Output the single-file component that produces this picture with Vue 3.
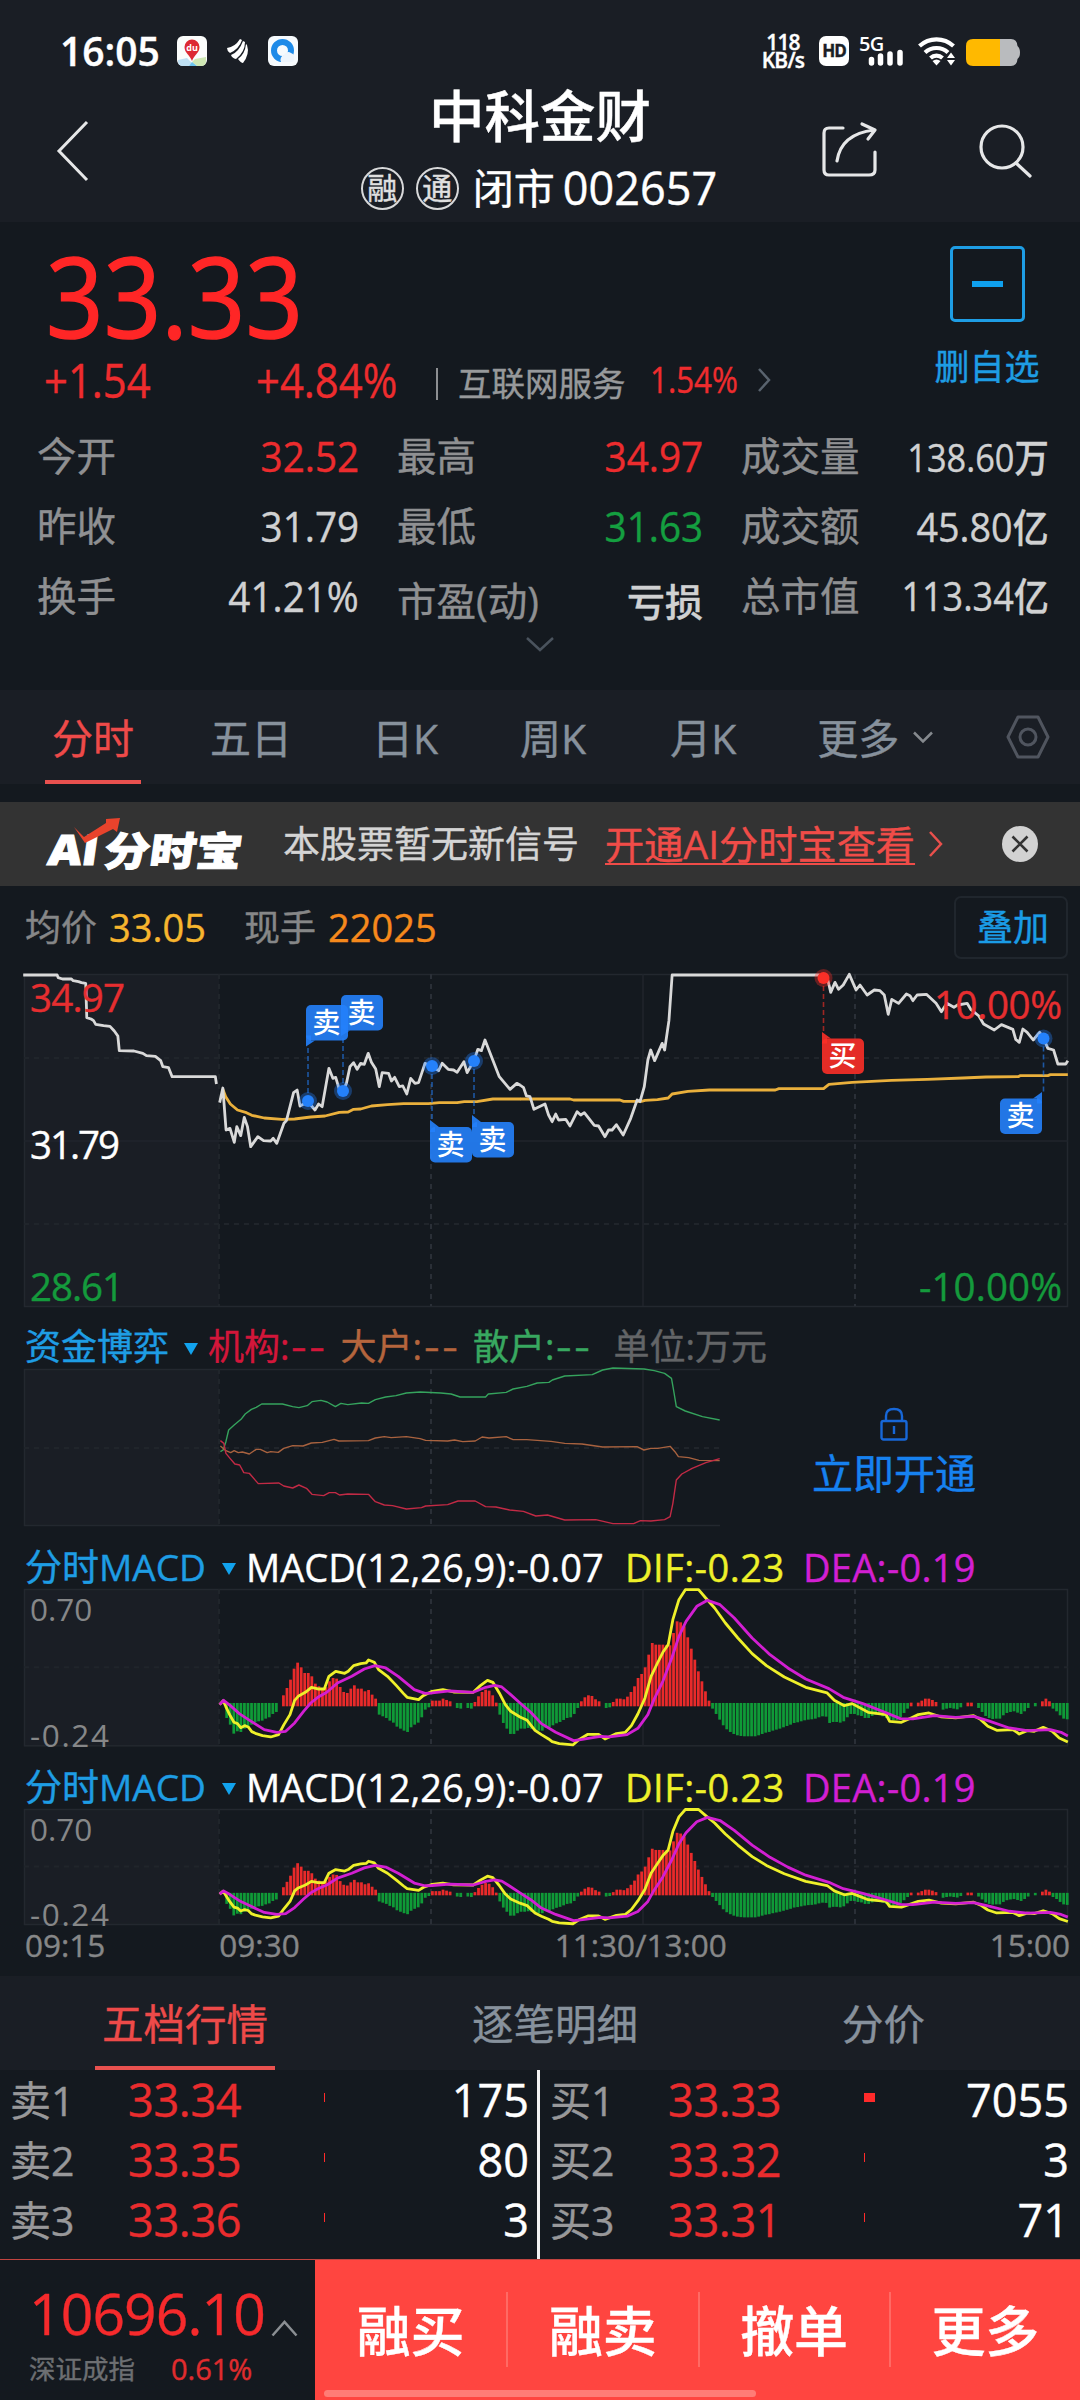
<template>
  <div class="app">
    <!-- status bar -->
    <div class="status">
      <span class="clock">16:05</span>
      <svg class="st-icon" width="30" height="30" viewBox="0 0 30 30">
        <rect width="30" height="30" rx="6" fill="#fbfdfc" />
        <path d="M1 24 L10 22 L15 27 L12 30 H6 Q1 30 1 25Z" fill="#bfe0f4" />
        <path d="M18 23 L29 21 V25 Q29 30 24 30 H20 L15 26Z" fill="#cfe8b4" />
        <path d="M12 30 L15 26 L20 30Z" fill="#6cc4ee" />
        <path d="M15 25 C13 19 7.500 17 7.500 11 A7.500 7.500 0 0 1 22.500 11 C22.500 17 17 19 15 25Z" fill="#dd2a33" />
        <text x="15" y="14.500" class="du">du</text>
      </svg>
      <svg class="st-icon swoosh" width="23" height="26" viewBox="0 0 23 26">
        <path d="M0 10 Q8 9 13 1 L15 2 Q12 11 3 15 Q0 13 0 10Z" fill="#fff" />
        <path d="M4 17 Q12 14 16 3 L18 4 Q18 14 9 21 Q5 20 4 17Z" fill="#fff" />
        <path d="M11 21 Q18 16 19 6 L20 7 Q23 16 16 25 Q14 25 11 21Z" fill="#fff" />
      </svg>
      <svg class="st-icon" width="30" height="30" viewBox="0 0 30 30">
        <rect width="30" height="30" rx="6" fill="#f6fafd" />
        <circle cx="14.500" cy="14.500" r="8.500" fill="none" stroke="#1d8ae8" stroke-width="6" />
        <path d="M13 26 a5 5 0 0 1 3 -7 a4.500 4.500 0 0 1 7 -2 a4 4 0 0 1 3 5 q1 3 -2 4Z" fill="#eef5fc" />
      </svg>
      <div class="spacer"></div>
      <div class="speed"><span>118</span><span>KB/s</span></div>
      <div class="hd">HD</div>
      <svg class="signal" width="46" height="32" viewBox="0 0 46 32">
        <text x="0" y="15.500" class="fiveg">5G</text>
        <path d="M12.500 28V24.500M21.500 28V21M31 28V19M41 28V17.500" stroke="#fff" stroke-width="5.500" stroke-linecap="round" />
      </svg>
      <svg class="wifi" width="38" height="30" viewBox="0 0 38 30">
        <g fill="none" stroke="#fff" stroke-width="4.200">
          <path d="M1.500 10 A25 25 0 0 1 35.500 10" />
          <path d="M7 16.500 A17 17 0 0 1 30 16.500" />
          <path d="M12.500 22 A9 9 0 0 1 24.500 22" />
        </g>
        <path d="M14.500 25 Q18.500 22 22.500 25 L18.500 29.500Z" fill="#fff" />
        <path d="M29 22 L33 16.500 L37 22Z M29 24 H37 L33 29.500Z" fill="#fff" />
      </svg>
      <svg class="battery" width="54" height="27" viewBox="0 0 54 27">
        <path d="M34 0 H45 Q51 0 51.500 7 Q54 9 54 13.500 Q54 18 51.500 20 Q51 27 45 27 H34Z" fill="#b9bbbe" />
        <path d="M7 0 H34 V27 H7 Q0 27 0 20 V7 Q0 0 7 0Z" fill="#ffb900" />
      </svg>
    </div>

    <!-- title bar -->
    <div class="header">
      <svg class="back" width="34" height="62" viewBox="0 0 34 62">
        <path d="M31 2 L3 31 L31 60" fill="none" stroke="#e6e7e8" stroke-width="3" />
      </svg>
      <div class="title">
        <div class="name">中科金财</div>
        <div class="code">
          <span class="badge">融</span>
          <span class="badge">通</span>
          <span class="market">闭市</span>
          <span>002657</span>
        </div>
      </div>
      <div class="actions">
        <svg width="58" height="58" viewBox="0 0 58 58">
          <g fill="none" stroke="#e6e7e8" stroke-width="3.200" stroke-linecap="round" stroke-linejoin="round">
            <path d="M22 7 H8 Q3 7 3 12 V49 Q3 54 8 54 H48 Q54 54 54 49 V31" />
            <path d="M16 40 Q20 13 53 9 M41 3 L54 9 L47 18" />
          </g>
        </svg>
        <svg width="54" height="58" viewBox="0 0 54 58">
          <g fill="none" stroke="#e6e7e8" stroke-width="3.200" stroke-linecap="round">
            <circle cx="23" cy="26" r="21" />
            <path d="M37 42 L51 55" />
          </g>
        </svg>
      </div>
    </div>

    <!-- quote -->
    <div class="quote">
      <div class="quote-top">
        <div class="left">
          <div class="price">33.33</div>
          <div class="change">
            <span class="diff">+1.54</span>
            <span class="rate">+4.84%</span>
            <i class="bar"></i>
            <span class="industry">互联网服务</span>
            <span class="industry-rate">1.54%</span>
            <svg width="14" height="24" viewBox="0 0 14 24">
              <path d="M2 1 L12 12 L2 23" fill="none" stroke="#59636e" stroke-width="2.500" />
            </svg>
          </div>
        </div>
        <div class="fav">
          <div class="fav-box"><i></i></div>
          <span>删自选</span>
        </div>
      </div>
      <div class="stats">
        <div v-for="(item, i) in stats" :key="item.label" class="stat" :class="{ low: i === 7 }">
          <span class="label">{{ item.label }}</span>
          <span class="value" :class="item.cls">{{ item.value }}<b v-if="item.unit">{{ item.unit }}</b></span>
        </div>
      </div>
      <svg class="expand" width="28" height="15" viewBox="0 0 28 15">
        <path d="M1 1 L14 13 L27 1" fill="none" stroke="#4a535d" stroke-width="2.500" />
      </svg>
    </div>

    <!-- period tabs -->
    <div class="periods">
      <span v-for="(p, i) in periods" :key="p.text" class="period" :class="{ active: i === 0 }" :style="{ marginLeft: p.gap + 'px' }">{{ p.text }}</span>
      <svg class="more" width="20" height="13" viewBox="0 0 20 13">
        <path d="M1 1.500 L10 10.500 L19 1.500" fill="none" stroke="#85898e" stroke-width="2.500" />
      </svg>
      <svg class="setting" width="44" height="44" viewBox="0 0 44 44">
        <g fill="none" stroke="#50555f" stroke-width="3" stroke-linejoin="round">
          <path d="M12 2 H32 L42 22 L32 42 H12 L2 22Z" />
          <circle cx="22" cy="22" r="8" />
        </g>
      </svg>
    </div>

    <!-- AI banner -->
    <div class="banner">
      <svg class="logo" width="204" height="76" viewBox="40 806 204 76">
        <g class="logo-text" transform="translate(121,0) skewX(-8)">
          <text x="47" y="865" textLength="50" lengthAdjust="spacingAndGlyphs" font-size="42">AI</text>
          <text x="103" y="866" textLength="138" lengthAdjust="spacingAndGlyphs" font-size="40">分时宝</text>
        </g>
        <path d="M74 827 L84 837 L106 823 L106 819 L120 818 L117 832 L113 829 L85 843Z" fill="#e8432c" />
      </svg>
      <span class="tip">本股票暂无新信号</span>
      <span class="link">开通AI分时宝查看</span>
      <svg width="16" height="26" viewBox="0 0 16 26">
        <path d="M2 1 L13 13 L2 25" fill="none" stroke="#e9504c" stroke-width="2.500" />
      </svg>
      <svg class="close" width="36" height="36" viewBox="0 0 36 36">
        <circle cx="18" cy="18" r="18" fill="#d2d2d2" />
        <path d="M10.500 10.500 L25.500 25.500 M25.500 10.500 L10.500 25.500" stroke="#333" stroke-width="2.600" />
      </svg>
    </div>

    <!-- average / last hand -->
    <div class="legend">
      <span class="gray">均价</span>
      <span class="avg">33.05</span>
      <span class="gray hand">现手</span>
      <span class="vol">22025</span>
      <span class="overlay">叠加</span>
    </div>

    <!-- price chart -->
    <svg class="chart" width="1080" height="345" viewBox="0 965 1080 345">
      <rect x="24" y="974" width="195" height="332" fill="#1a1e25" />
      <rect x="24.500" y="974.500" width="1043" height="332" class="frame" />
      <path d="M24 1058H1068M24 1224H1068M219 974V1306" class="dash faint" />
      <path d="M431 974V1306M855 974V1306" class="dash" />
      <path d="M24 1141H1068M643 974V1306" class="grid" />
      <g class="line avg-line">
        <polyline :points="avgAm" transform="translate(0,950) scale(0.35714,0.33333)" />
        <polyline :points="avgPm" transform="translate(520,950) scale(0.35714,0.33333)" />
      </g>
      <g class="line price-line">
        <polyline :points="auction" transform="translate(0,950) scale(0.35714,0.33333)" />
        <polyline :points="priceAm" transform="translate(0,950) scale(0.35714,0.33333)" />
        <polyline :points="pricePm" transform="translate(520,950) scale(0.35714,0.33333)" />
      </g>
      <g v-for="(f, i) in flags" :key="i">
        <line :x1="f.dx" :y1="f.dy" :x2="f.dx" :y2="f.tail" :stroke="f.color" class="stem" />
        <circle :cx="f.dx" :cy="f.dy" r="9" :fill="f.color" opacity="0.35" />
        <circle :cx="f.dx" :cy="f.dy" r="6" :fill="f.color" />
        <path :d="tailPath(f)" :fill="f.color" opacity="0.9" />
        <rect :x="f.x" :y="f.y" width="42" height="35.500" rx="5" :fill="f.color" opacity="0.9" />
        <text :x="f.x + 20.500" :y="f.y + 27.500" class="flag-text">{{ f.text }}</text>
      </g>
      <g class="axis-lg">
        <text x="30" y="1011.500" textLength="95" fill="#e62e30" stroke="#e62e30">34.97</text>
        <text x="30" y="1158.500" textLength="90" fill="#fff" stroke="#fff">31.79</text>
        <text x="30" y="1301" textLength="94" fill="#149a3c" stroke="#149a3c">28.61</text>
        <text x="934" y="1018.500" textLength="128" fill="#e62e30" stroke="#e62e30">10.00%</text>
        <text x="919" y="1301" textLength="143" fill="#149a3c" stroke="#149a3c">-10.00%</text>
      </g>
    </svg>

    <!-- fund flow -->
    <div class="ind-title fund-title">
      <span class="ind-name">资金博弈</span><i class="tri"></i>
      <span class="org">机构:<em>--</em></span>
      <span class="big">大户:<em>--</em></span>
      <span class="small">散户:<em>--</em></span>
      <span class="unit">单位:万元</span>
    </div>
    <div class="fund">
      <svg class="chart" width="722" height="164" viewBox="0 1366 722 164">
        <rect x="24" y="1369" width="195" height="157" fill="#1a1e25" />
        <path d="M720 1369.500H24.500V1525.500H720" class="frame" />
        <path d="M24 1448H720M219 1369V1526" class="dash faint" />
        <path d="M431 1369V1526" class="dash" />
        <path d="M643 1369V1526" class="grid" />
        <g class="line thin" transform="translate(0,1310) scale(0.68871,0.33333)">
          <polyline :points="fundGreen" stroke="#35a35d" />
          <polyline :points="fundOrange" stroke="#a8623f" />
          <polyline :points="fundRed" stroke="#c22a45" />
        </g>
      </svg>
      <div class="unlock">
        <svg width="28" height="34" viewBox="0 0 28 34">
          <g fill="none" stroke="#1767d8" stroke-width="2.400">
            <rect x="1.500" y="14" width="25" height="18.500" rx="2" />
            <path d="M6 14 V9 Q6 2 14 2 Q22 2 22 9 V14 M14 19 V27" />
          </g>
        </svg>
        <span>立即开通</span>
      </div>
    </div>

    <!-- MACD, shown twice with different heights -->
    <template v-for="m in macds" :key="m.box">
      <div class="ind-title">
        <span class="ind-name macd-name">分时MACD</span><i class="tri"></i>
        <span class="macd">MACD(12,26,9):-0.07</span>
        <span class="dif">DIF:-0.23</span>
        <span class="dea">DEA:-0.19</span>
      </div>
      <svg class="chart" width="1080" :height="m.box" :viewBox="`0 -3 1080 ${m.box}`">
        <rect x="24" y="0" width="195" :height="m.height" fill="#1a1e25" />
        <rect x="24.500" y="0.500" width="1043" :height="m.height" class="frame" />
        <path :d="`M24 ${m.height / 2}H1068M219 0V${m.height}`" class="dash faint" />
        <path :d="`M431 0V${m.height}M855 0V${m.height}`" class="dash" />
        <path :d="`M643 0V${m.height}`" class="grid" />
        <g :transform="`scale(0.35714,${m.height / 469}) translate(0,-178)`">
          <rect v-for="b in bars" :key="b.x" :x="b.x" :y="b.y" width="7.800" :height="b.h" :fill="b.color" />
          <g class="line">
            <polyline :points="dif" stroke="#eef02a" />
            <polyline :points="dea" stroke="#d21fd2" />
          </g>
        </g>
        <g class="axis-sm">
          <text x="30" y="32">0.70</text>
          <text x="30" :y="m.height + 1.500" textLength="79">-0.24</text>
        </g>
      </svg>
    </template>
    <div class="times">
      <span>09:15</span>
      <span class="t2">09:30</span>
      <span class="t3">11:30/13:00</span>
      <span class="t4">15:00</span>
    </div>

    <!-- order book -->
    <div class="book-tabs">
      <span class="book-tab active">五档行情</span>
      <span class="book-tab detail">逐笔明细</span>
      <span class="book-tab">分价</span>
    </div>
    <div class="book">
      <div v-for="(side, i) in book" :key="i" class="side">
        <div v-for="row in side" :key="row.label" class="order">
          <span class="order-label">{{ row.label }}</span>
          <span class="order-price">{{ row.price }}</span>
          <span class="tick"><i :style="{ width: row.bar + 'px' }"></i></span>
          <span class="order-vol">{{ row.vol }}</span>
        </div>
      </div>
    </div>

    <!-- bottom bar -->
    <div class="bottom">
      <div class="index">
        <div class="index-main">
          <span>10696.10</span>
          <svg width="27" height="17" viewBox="0 0 27 17">
            <path d="M1.500 15.500 L13.500 2 L25.500 15.500" fill="none" stroke="#8b8f93" stroke-width="2.500" />
          </svg>
        </div>
        <div class="index-sub"><span>深证成指</span><span class="pct">0.61%</span></div>
      </div>
      <div class="trade">
        <span v-for="t in ['融买', '融卖', '撤单', '更多']" :key="t" class="trade-btn">{{ t }}</span>
        <i class="home-bar"></i>
      </div>
    </div>
  </div>
</template>

<script setup>
const stats = [
  { label: '今开', value: '32.52', cls: 'red' },
  { label: '最高', value: '34.97', cls: 'red' },
  { label: '成交量', value: '138.60', unit: '万', cls: 's39' },
  { label: '昨收', value: '31.79' },
  { label: '最低', value: '31.63', cls: 'green' },
  { label: '成交额', value: '45.80', unit: '亿', cls: 's42' },
  { label: '换手', value: '41.21%' },
  { label: '市盈(动)', value: '亏损', cls: 'cn' },
  { label: '总市值', value: '113.34', unit: '亿', cls: 's40' }
]

const periods = [
  { text: '分时', gap: 45 },
  { text: '五日', gap: 69 },
  { text: '日K', gap: 80 },
  { text: '周K', gap: 82 },
  { text: '月K', gap: 84 },
  { text: '更多', gap: 81 }
]

const macds = [
  { box: 164, height: 156.3 },
  { box: 122, height: 115 }
]

const book = [
  [
    { label: '卖1', price: '33.34', bar: 1, vol: '175' },
    { label: '卖2', price: '33.35', bar: 1, vol: '80' },
    { label: '卖3', price: '33.36', bar: 1, vol: '3' }
  ],
  [
    { label: '买1', price: '33.33', bar: 11, vol: '7055' },
    { label: '买2', price: '33.32', bar: 1, vol: '3' },
    { label: '买3', price: '33.31', bar: 1, vol: '71' }
  ]
]

const BLUE = '#2481fb'
const flags = [
  { text: '卖', x: 306, y: 1005, dx: 308, dy: 1101, tail: 1046.5, color: BLUE },
  { text: '卖', x: 341, y: 995, dx: 343, dy: 1091, tail: 1036, color: BLUE },
  { text: '卖', x: 430, y: 1127, dx: 432, dy: 1066, tail: 1120, color: BLUE },
  { text: '卖', x: 472, y: 1122, dx: 474, dy: 1061, tail: 1115, color: BLUE },
  { text: '买', x: 822, y: 1038.5, dx: 823.5, dy: 978, tail: 1032, color: '#fb2f27' },
  { text: '卖', x: 1000, y: 1098.5, dx: 1043.5, dy: 1038.5, tail: 1092, color: BLUE, right: true }
]

// small triangle that joins a flag to its dashed stem
function tailPath(f) {
  const edge = f.tail < f.y ? f.y : f.y + 35.5
  if (f.right) return `M${f.x + 42} ${f.tail}V${edge + 5}H${f.x + 37}V${edge}H${f.x + 33}Z`
  const inner = f.tail < f.y ? edge + 5 : edge - 5
  return `M${f.x} ${f.tail}V${inner}H${f.x + 5}V${edge}H${f.x + 9}Z`
}

const auction = '65,75 160,75 163,83 175,87 200,87 205,92 220,95 228,98 240,100 243,203 255,207 262,212 268,223 290,227 308,229 320,243 330,258 334,302 375,303 400,310 410,317 435,319 450,332 456,350 472,353 482,380 603,380 606,402'
const priceAm = '615,458 624,414 633,540 644,535 656,577 663,530 674,557 684,502 693,530 702,590 722,560 738,572 758,573 765,565 775,580 795,520 802,512 822,428 832,420 840,468 862,455 882,480 892,462 902,470 921,355 932,385 940,382 950,418 960,423 970,400 980,350 990,338 1000,358 1010,340 1020,343 1031,310 1040,337 1052,357 1062,410 1070,368 1088,370 1096,393 1105,382 1118,410 1128,408 1139,432 1150,385 1162,400 1172,398 1190,340 1209,350 1228,362 1238,340 1255,358 1270,360 1280,367 1299,335 1308,368 1327,332 1338,298 1348,302 1358,270 1398,380 1428,418 1447,400 1457,406'
const pricePm = '0,405 10,413 18,438 28,440 39,478 70,462 80,495 90,515 100,492 108,510 128,508 140,528 160,485 170,495 180,488 208,526 220,528 238,560 248,540 258,540 270,524 289,555 310,505 328,450 336,455 348,410 358,330 366,300 377,332 398,280 405,300 417,212 426,75 838,75 850,85 862,90 870,127 882,97 892,118 905,105 922,73 941,120 952,105 972,135 992,120 1008,122 1020,135 1031,193 1041,148 1060,160 1082,132 1092,137 1100,152 1112,135 1138,133 1165,160 1180,185 1195,160 1215,172 1225,165 1252,160 1262,178 1285,198 1298,222 1328,240 1348,224 1380,238 1388,268 1398,277 1408,237 1420,247 1437,270 1455,247 1466,265 1478,295 1494,300 1506,342 1528,342 1534,332'
const avgAm = '624,418 632,440 645,462 665,480 690,488 705,496 740,504 790,508 825,507 870,501 910,498 950,487 975,486 990,478 1010,477 1040,468 1085,464 1130,461 1200,461 1230,458 1280,458 1300,455 1335,455 1380,447 1457,447'
const avgPm = '0,447 140,447 150,450 280,450 290,454 340,454 350,451 385,449 415,444 426,432 470,424 530,420 715,420 725,416 850,416 865,403 930,397 1040,391 1140,388 1240,384 1305,381 1395,380 1400,377 1478,377 1485,374 1534,374'

const fundGreen = '320,425 324,420 328,395 332,360 340,345 350,328 356,312 365,298 372,292 380,282 410,282 425,290 434,293 446,287 453,275 466,271 475,276 487,290 495,280 505,284 525,279 535,280 545,269 560,261 575,257 590,249 610,246 640,249 655,252 668,261 705,261 709,252 735,247 745,237 765,229 780,219 797,217 802,210 820,198 860,194 875,180 890,174 935,177 950,182 965,190 975,205 978,240 982,290 995,303 1020,320 1045,330'
const fundOrange = '320,408 328,422 335,428 340,422 346,428 352,426 362,432 372,418 378,418 388,428 393,425 404,427 412,415 425,407 440,408 452,399 468,397 485,388 492,393 535,392 545,384 558,380 568,383 590,380 610,386 618,391 650,393 660,390 672,395 690,393 700,381 710,384 735,380 745,389 765,389 785,392 800,394 820,400 845,402 875,411 925,410 935,420 945,415 955,415 973,409 980,425 985,440 1000,443 1015,451 1045,452'
const fundRed = '320,392 325,400 328,430 334,445 341,462 348,465 354,488 362,490 375,521 405,519 412,528 425,534 434,525 445,535 453,553 470,557 478,548 487,548 493,555 505,552 535,553 545,575 558,585 570,587 590,597 612,593 618,588 650,584 665,573 690,573 705,590 720,591 740,600 760,604 778,618 795,615 820,630 865,629 890,641 920,641 930,632 945,633 965,629 973,620 977,580 982,510 990,492 1005,475 1025,458 1045,446'

const dif = '615,525 625,513 632,530 643,555 655,578 665,582 674,594 685,588 695,592 705,606 715,611 735,618 758,622 780,615 795,585 812,555 825,512 835,500 855,488 872,473 890,478 908,478 921,440 940,425 965,431 975,425 990,408 1010,402 1025,400 1032,391 1048,398 1060,420 1085,440 1110,468 1130,492 1140,503 1172,510 1185,498 1210,485 1240,480 1270,487 1325,488 1345,468 1365,452 1380,458 1398,490 1415,525 1430,545 1456,562 1476,572 1498,602 1516,615 1536,628 1546,636 1566,642 1604,646 1621,630 1646,614 1676,614 1694,628 1726,612 1751,608 1768,588 1786,553 1806,505 1823,440 1841,400 1856,368 1871,345 1884,270 1901,210 1919,180 1956,180 1976,205 2001,235 2031,280 2066,325 2106,372 2146,408 2196,442 2256,473 2316,490 2336,512 2364,528 2386,522 2431,548 2481,555 2491,575 2524,578 2551,565 2571,555 2601,550 2636,562 2676,565 2726,558 2746,570 2766,590 2791,602 2836,600 2854,613 2876,603 2896,605 2921,593 2946,605 2966,625 2990,637'
const dea = '615,525 626,512 645,528 670,552 700,573 740,600 775,608 800,605 825,580 850,545 870,520 890,503 915,488 945,460 985,440 1020,418 1050,408 1080,415 1115,440 1160,480 1190,491 1210,490 1260,484 1325,488 1360,473 1385,467 1405,472 1430,495 1456,520 1486,548 1516,582 1556,608 1606,633 1626,630 1681,620 1706,622 1756,615 1786,596 1814,555 1831,510 1856,455 1881,385 1901,320 1921,275 1951,230 1981,212 2016,225 2056,265 2106,325 2156,375 2206,415 2256,448 2321,477 2361,503 2416,522 2476,547 2521,567 2556,568 2616,558 2676,563 2726,560 2766,573 2826,595 2876,603 2941,600 2971,608 2990,619'

// histogram, one value per minute, positive = red
const hist = [
  0, 0, -40, -60, -87, -80, -82, -72, -65, -60, -53, -50, -48, -42, -38, -28, -22, 0, 28, 50,
  75, 108, 126, 112, 95, 95, 85, 63, 55, 48, 52, 70, 80, 78, 53, 38, 35, 48, 58, 48,
  48, 40, 44, 30, 18, -30, -35, -40, -48, -54, -66, -72, -78, -82, -68, -60, -54, -38, -15, -8,
  12, 12, 12, 18, 14, 10, 0, -10, -12, 0, -10, -12, 8, 25, 38, 45, 42, 28, 6, -30,
  -55, -72, -88, -88, -78, -72, -72, -70, -73, -76, -78, -78, -70, -68, -62, -56, -52, -46, -40, -38,
  -28, -10, 10, 22, 28, 26, 16, 10, 0, -10, -8, 8, 18, 18, 16, 24, 38, 55, 80, 92,
  112, 150, 185, 180, 180, 180, 178, 178, 215, 250, 247, 235, 202, 168, 135, 100, 70, 40, 12, -12,
  -28, -45, -62, -74, -82, -88, -92, -94, -95, -95, -95, -95, -92, -88, -84, -82, -78, -75, -72, -68,
  -64, -60, -55, -53, -50, -47, -45, -44, -42, -38, -35, -36, -55, -52, -52, -54, -50, -38, -28, -28,
  -32, -34, -40, -40, -34, -30, -28, -35, -40, -45, -46, -46, -38, -25, -12, 6, 0, 6, 12, 18,
  18, 14, 8, 0, -15, -12, -10, -12, -14, -8, 0, 6, 6, 0, -10, -22, -34, -40, -43, -42,
  -42, -32, -25, -22, -20, -24, -28, -20, -10, 0, -5, 0, 10, 18, 10, -12, -20, -32, -42, -44
]

const bars = hist
  .map((v, i) => ({
    x: +(611 + i * 9.93).toFixed(1),
    y: v > 0 ? 525 - v : 520,
    h: Math.abs(v) + 5,
    color: v > 0 ? '#e92a2a' : '#0f9a37',
    v
  }))
  .filter((b) => b.v !== 0)
</script>

<style>
body {
  background: #14191f;
}
</style>

<style scoped>
.app {
  width: 1080px;
  height: 2400px;
  overflow: hidden;
  background: #14191f;
  color: #fff;
  font-family: "Open Sans", "Noto Sans CJK SC", sans-serif;
  white-space: nowrap;
  -webkit-text-stroke: 0.4px;
}

svg {
  display: block;
  flex: none;
  overflow: visible;
}

i,
em {
  font-style: normal;
}

/* status bar */
.status {
  display: flex;
  align-items: center;
  height: 102px;
  padding: 0 60px 0 60px;
  box-sizing: border-box;
  background: #1a1e25;
}
.clock {
  width: 117px;
  font-size: 39px;
  line-height: 52px;
  font-weight: 600;
}
.st-icon {
  margin-right: 20px;
}
.swoosh {
  margin-right: 18px;
}
.du {
  fill: #fff;
  font-size: 9px;
  font-weight: 700;
  text-anchor: middle;
}
.spacer {
  flex: 1;
}
.speed {
  display: flex;
  flex-direction: column;
  align-items: center;
  width: 42px;
  margin-right: 15px;
  font-size: 21px;
  line-height: 18px;
  font-weight: 600;
  letter-spacing: -0.8px;
}
.hd {
  width: 30px;
  height: 30px;
  margin-right: 10px;
  border-radius: 7px;
  background: #fff;
  color: #1a1e25;
  font-size: 17px;
  line-height: 30px;
  font-weight: 700;
  text-align: center;
  letter-spacing: -1px;
}
.signal {
  margin-right: 13px;
}
.fiveg {
  fill: #fff;
  font-size: 20px;
  font-weight: 600;
  letter-spacing: -0.8px;
}
.wifi {
  margin-right: 10px;
}
.battery {
  margin-top: 3px;
}

/* header */
.header {
  display: grid;
  grid-template-columns: 300px 480px 300px;
  height: 120px;
  background: #1a1e25;
}
.back {
  margin: 18px 0 0 56px;
}
.title {
  display: flex;
  flex-direction: column;
  align-items: center;
  margin-top: -18px;
}
.name {
  height: 66px;
  font-size: 55.5px;
  line-height: 64px;
  font-weight: 500;
}
.code {
  display: flex;
  align-items: center;
  height: 76px;
  margin-right: 2px;
  font-size: 45px;
  line-height: 76px;
}
.badge {
  box-sizing: border-box;
  width: 43px;
  height: 43px;
  margin-right: 12px;
  border: 2px solid #d8d9da;
  border-radius: 50%;
  font-size: 30px;
  line-height: 38px;
  text-align: center;
  color: #e0e0e0;
}
.market {
  margin: 0 8px 0 2px;
  font-size: 41px;
}
.actions {
  display: flex;
  gap: 100px;
  margin: 19px 0 0 41px;
}

/* quote */
.quote {
  height: 468px;
  color: #d0d1d2;
}
.quote-top {
  display: flex;
  justify-content: space-between;
  height: 199px;
  padding: 0 41px 0 44px;
}
.price {
  height: 100px;
  margin: 23px 0 0 2px;
  font-size: 112px;
  line-height: 100px;
  font-weight: 500;
  color: #ff2626;
  -webkit-text-stroke: 1.5px;
  transform: scaleX(0.9);
  transform-origin: left;
}
.change {
  display: flex;
  align-items: center;
  height: 60px;
  margin-top: 5px;
  line-height: 60px;
  color: #ee2c2e;
}
.diff,
.rate {
  width: 212px;
  font-size: 47px;
  font-weight: 500;
  transform: scaleX(0.89);
  transform-origin: left;
}
.rate {
  width: 180px;
}
.bar {
  width: 2px;
  height: 32px;
  margin-top: 8px;
  background: #8d8f92;
}
.industry {
  width: 192px;
  margin: 6px 0 0 20px;
  font-size: 33.5px;
  color: #97999b;
}
.industry-rate {
  width: 107px;
  font-size: 36px;
  transform: scaleX(0.87);
  transform-origin: left;
}
.fav {
  display: flex;
  flex-direction: column;
  align-items: center;
  width: 104px;
  margin-top: 24px;
  font-size: 35px;
  line-height: 44px;
  color: #1e9de4;
}
.fav-box {
  display: flex;
  align-items: center;
  justify-content: center;
  box-sizing: border-box;
  width: 75px;
  height: 76px;
  margin-bottom: 23px;
  border: 3px solid #1e9de4;
  border-radius: 5px;
}
.fav-box i {
  width: 31px;
  height: 6px;
  margin-bottom: 1px;
  background: #0fa0ee;
}
.stats {
  display: grid;
  grid-template-columns: 322px 306px 308px;
  grid-auto-rows: 70px;
  column-gap: 38px;
  padding: 0 0 0 37px;
}
.stat {
  display: flex;
  justify-content: space-between;
  line-height: 70px;
}
.stat.low {
  position: relative;
  top: 5px;
}
.label {
  font-size: 39.5px;
  color: #8f9092;
}
.value {
  font-size: 42px;
  transform: scaleX(0.92);
  transform-origin: right;
}
.value.red {
  color: #ec2c2e;
}
.value.green {
  color: #149f40;
}
.value b {
  font-size: 39px;
  font-weight: 500;
}
.value.s39 {
  font-size: 39px;
  transform: scaleX(0.88);
  padding-top: 1px;
}
.value.s42 {
  font-size: 41px;
}
.value.s40 {
  font-size: 40px;
  transform: scaleX(0.9);
}
.value.cn {
  font-size: 38px;
  transform: none;
  font-weight: 500;
}
.expand {
  margin: 6px auto 0;
}

/* period tabs */
.periods {
  display: flex;
  align-items: center;
  height: 94px;
  background: #1a1e25;
  font-size: 41px;
  line-height: 96px;
  color: #87919c;
}
.period {
  height: 94px;
}
.period.active {
  box-sizing: border-box;
  width: 96px;
  text-align: center;
  color: #ee4a49;
  border-bottom: 4.5px solid #e9514f;
}
.more {
  margin-left: 14px;
}
.setting {
  margin-left: auto;
  margin-right: 30px;
}

/* banner */
.banner {
  display: flex;
  align-items: center;
  height: 84px;
  margin-top: 18px;
  background: #333;
  line-height: 84px;
}
.logo {
  margin-left: 40px;
}
.logo-text {
  font-weight: 900;
  fill: #fff;
  stroke: #fff;
  stroke-width: 1px;
}
.tip {
  width: 322px;
  margin-left: 39px;
  font-size: 37px;
  color: #d4d4d4;
}
.link {
  width: 312px;
  margin-right: 11px;
  font-size: 39.2px;
  line-height: 56px;
  color: #f04c48;
  text-decoration: underline;
  text-decoration-thickness: 2px;
  text-underline-offset: 4px;
}
.close {
  margin-left: auto;
  margin-right: 42px;
}

/* legend */
.legend {
  display: flex;
  align-items: center;
  box-sizing: border-box;
  height: 79px;
  padding: 4px 12px 0 25px;
  font-size: 38px;
  line-height: 75px;
}
.gray {
  font-size: 36px;
  color: #868788;
}
.avg {
  width: 109px;
  margin-left: 12px;
  color: #f7b52e;
}
.hand {
  margin-left: 26px;
}
.vol {
  margin-left: 12px;
  color: #f6891c;
}
.overlay {
  box-sizing: border-box;
  width: 114px;
  height: 63px;
  margin: 0 0 0 auto;
  border: 2px solid #20262d;
  border-radius: 7px;
  font-size: 36px;
  line-height: 60px;
  text-align: center;
  text-indent: 4px;
  color: #1a9ce6;
}

/* charts */
.frame {
  fill: none;
  stroke: #23282f;
  stroke-width: 1.5px;
}
.grid {
  stroke: #20252c;
  stroke-width: 1.5px;
}
.dash {
  fill: none;
  stroke: #2a2f37;
  stroke-width: 2px;
  stroke-dasharray: 5px 5px;
}
.dash.faint {
  stroke: #20252b;
}
.line polyline {
  fill: none;
  stroke-width: 2.8px;
  stroke-linejoin: round;
  vector-effect: non-scaling-stroke;
}
.line.thin polyline {
  stroke-width: 1.4px;
}
.price-line {
  stroke: #d9d9d9;
}
.avg-line {
  stroke: #eab03c;
}
.stem {
  stroke-width: 1.6px;
  stroke-dasharray: 5px 3px;
  opacity: 0.6;
}
.flag-text {
  fill: #fff;
  font-size: 28px;
  font-weight: 500;
  text-anchor: middle;
}
.axis-lg {
  font-size: 38.5px;
  stroke-width: 0.4px;
}
.axis-sm {
  font-size: 31.5px;
  fill: #868788;
}

/* indicator titles */
.chart {
  position: relative;
}
.ind-title {
  display: flex;
  align-items: center;
  height: 38px;
  margin-top: 18px;
  padding-left: 25px;
  font-size: 38px;
  line-height: 38px;
}
.ind-name {
  width: 159px;
  font-size: 36px;
  color: #1e9de4;
}
.macd-name {
  width: 197px;
  font-size: 37px;
}
.tri {
  width: 0;
  height: 0;
  margin: 4px 10px 0 0;
  border: 7.5px solid transparent;
  border-top: 12px solid #12a3ee;
  border-bottom: 0;
}
.fund-title {
  font-size: 36px;
}
.org,
.big,
.small {
  width: 132.5px;
}
.fund-title em {
  display: inline-block;
  margin-left: 2px;
  letter-spacing: 2px;
  transform: scaleX(1.35);
  transform-origin: left;
}
.org {
  color: #d3163a;
}
.big {
  color: #b5653d;
}
.small {
  color: #38a860;
}
.unit {
  margin-left: 8px;
  color: #636567;
}
.macd {
  width: 379px;
}
.dif {
  width: 178px;
  letter-spacing: 0.5px;
  color: #eef02a;
}
.dea {
  letter-spacing: 0.3px;
  color: #d21fd2;
}

.fund {
  display: flex;
  height: 164px;
}
.unlock {
  display: flex;
  flex-direction: column;
  align-items: center;
  width: 344px;
  padding-top: 41px;
  font-size: 41px;
  line-height: 64px;
  color: #1681f0;
}
.times {
  display: flex;
  height: 48px;
  padding: 0 10px 0 25px;
  font-size: 31.5px;
  line-height: 34px;
  color: #868788;
}
.t2 {
  margin-left: 114px;
}
.t3 {
  margin-left: 255px;
}
.t4 {
  margin-left: auto;
}

/* order book */
.book-tabs {
  display: flex;
  height: 94px;
  padding-left: 95px;
  background: #1a1e25;
  font-size: 41.5px;
  line-height: 96px;
  color: #87919c;
}
.book-tab.active {
  box-sizing: border-box;
  width: 180px;
  color: #ee4a49;
  text-align: center;
  border-bottom: 4px solid #e9514f;
}
.detail {
  width: 370px;
  margin-left: 197px;
}
.book {
  display: flex;
  height: 189px;
}
.side {
  box-sizing: border-box;
  width: 541px;
  padding: 0 11px 0 10px;
}
.side:first-child {
  border-right: 3px solid #f2f2f2;
  padding-right: 8px;
}
.order {
  display: flex;
  align-items: center;
  height: 60px;
  font-size: 45px;
  line-height: 60px;
}
.order-label {
  width: 118px;
  font-size: 41px;
  color: #98989a;
}
.order-price {
  width: 196px;
  letter-spacing: -0.3px;
  color: #ea2c2e;
}
.tick i {
  display: block;
  height: 9px;
  margin-bottom: 6px;
  background: #ff2a2a;
}
.order-vol {
  margin-left: auto;
}

/* bottom bar */
.bottom {
  display: flex;
  box-sizing: border-box;
  height: 141px;
  border-top: 1px solid #c2433f;
}
.index {
  width: 315px;
  padding: 22px 0 0 29px;
  box-sizing: border-box;
}
.index-main {
  display: flex;
  align-items: center;
  height: 62px;
  font-size: 57px;
  line-height: 62px;
  letter-spacing: -0.9px;
  color: #f62a2c;
}
.index-main svg {
  margin: 30px 0 0 6px;
}
.index-sub {
  display: flex;
  height: 50px;
  font-size: 26.5px;
  line-height: 50px;
  color: #6d6f72;
}
.pct {
  margin-left: 36px;
  font-size: 29px;
  color: #e02c2e;
}
.trade {
  position: relative;
  display: flex;
  width: 765px;
  background: #ff4540;
}
.trade-btn {
  display: flex;
  justify-content: center;
  width: 192px;
  height: 75px;
  margin-top: 32px;
  font-size: 54px;
  line-height: 79px;
  font-weight: 500;
}
.trade-btn + .trade-btn {
  box-sizing: border-box;
  border-left: 2px solid #ff6a64;
}
.home-bar {
  position: absolute;
  left: 9px;
  bottom: 3px;
  width: 432px;
  height: 7px;
  border-radius: 4px;
  background: #ff7c76;
}
</style>
